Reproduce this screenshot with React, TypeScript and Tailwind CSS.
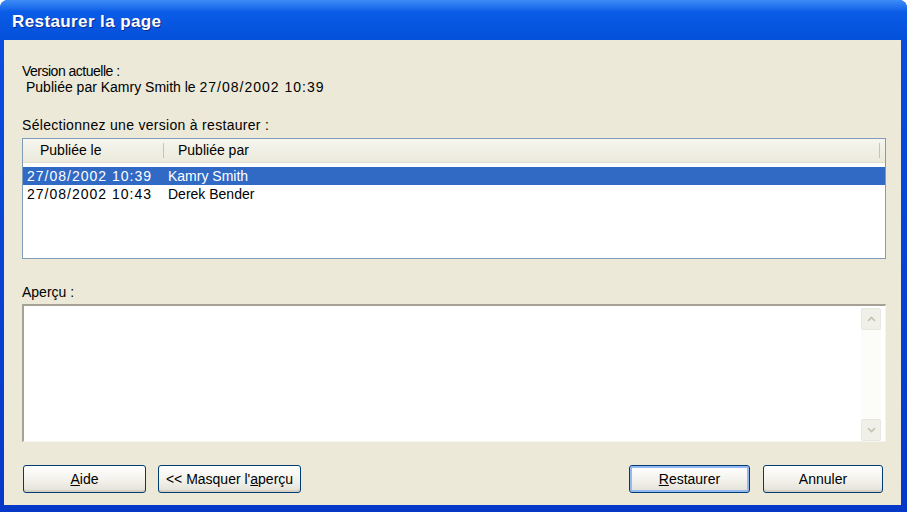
import React from 'react';

const font = { fontFamily: '"Liberation Sans", Arial, sans-serif' };

function XpButton({ children, primary, className }: { children: React.ReactNode; primary?: boolean; className?: string }) {
  return (
    <button
      className={`h-[28px] rounded-[3px] border border-[#003c74] bg-gradient-to-b from-white via-[#f4f3ee] to-[#e3e1d6] text-[14px] leading-none text-black ${
        primary ? 'shadow-[inset_0_0_0_2px_#94b8f2]' : 'shadow-[inset_0_-2px_0_#d6d0c5]'
      } ${className ?? ''}`}
    >
      {children}
    </button>
  );
}

const rows = [
  { date: '27/08/2002 10:39', by: 'Kamry Smith', selected: true },
  { date: '27/08/2002 10:43', by: 'Derek Bender', selected: false },
];

export default function App() {
  return (
    <div className="h-[512px] w-[907px] bg-white" style={font}>
      <div className="flex h-full w-full flex-col overflow-hidden rounded-t-[8px] bg-gradient-to-b from-[#0a4ee0] to-[#0638c8]">
        {/* title bar */}
        <div className="flex h-[40px] shrink-0 items-center bg-gradient-to-b from-[#3d8cf7] via-[#0a5be6] via-30% to-[#0450da] pl-[12px] pt-[3px]">
          <span className="text-[17px] font-bold tracking-[0.4px] text-white [text-shadow:1px_1px_0_#0a2a8a]">
            Restaurer la page
          </span>
        </div>

        {/* body */}
        <div className="mb-[7px] ml-[4px] mr-[6px] flex flex-1 flex-col bg-[#ece9d8] pl-[18px] pr-[15px] text-[14px] text-black">
          <div className="mt-[23px] leading-[16px] tracking-[-0.5px]">Version actuelle :</div>
          <div className="ml-[4px] leading-[16px]">
            Publiée par Kamry Smith le <span className="tracking-[1px]">27/08/2002 10:39</span>
          </div>

          <div className="mt-[22px] leading-[16px] tracking-[0.3px]">Sélectionnez une version à restaurer :</div>
          <div className="mt-[5px] h-[121px] border border-[#7f9db9] bg-white">
            <div className="flex h-[24px] border-b border-[#e2dfd0] bg-gradient-to-b from-[#f6f5ef] to-[#ebeadb]">
              <div className="flex w-[140px] items-center pl-[17px]">Publiée le</div>
              <div className="my-[4px] w-px bg-[#c7c5b2]" />
              <div className="flex flex-1 items-center pl-[14px]">Publiée par</div>
              <div className="my-[4px] mr-[5px] w-px bg-[#c7c5b2]" />
            </div>
            <div className="mt-[4px]">
              {rows.map((r) => (
                <div
                  key={r.date}
                  className={`flex h-[18px] items-center leading-none ${r.selected ? 'bg-[#316ac5] text-white' : ''}`}
                >
                  <span className="w-[145px] pl-[4px] tracking-[1px]">{r.date}</span>
                  <span>{r.by}</span>
                </div>
              ))}
            </div>
          </div>

          <div className="mt-[25px] leading-[16px]">Aperçu :</div>
          <div className="mt-[4px] flex h-[138px] border-l-2 border-t-2 border-b border-r border-l-[#a5a295] border-t-[#a5a295] border-b-[#f5f4ee] border-r-[#f5f4ee] bg-white">
            <div className="flex-1" />
            <div className="mr-[4px] mt-[2px] flex w-[20px] flex-col bg-[#fcfcf8]">
              <div className="flex h-[22px] items-center justify-center rounded-[2px] border border-[#e8e7e0] bg-[#f0efe8]">
                <svg width="9" height="6" viewBox="0 0 9 6">
                  <path d="M1 5 L4.5 1.5 L8 5" fill="none" stroke="#c5c2b2" strokeWidth="1.6" />
                </svg>
              </div>
              <div className="flex-1" />
              <div className="flex h-[22px] items-center justify-center rounded-[2px] border border-[#e8e7e0] bg-[#f0efe8]">
                <svg width="9" height="6" viewBox="0 0 9 6">
                  <path d="M1 1 L4.5 4.5 L8 1" fill="none" stroke="#c5c2b2" strokeWidth="1.6" />
                </svg>
              </div>
            </div>
          </div>

          <div className="mt-[23px] flex items-center">
            <XpButton className="ml-[1px] w-[123px]">
              <span className="underline underline-offset-1">A</span>ide
            </XpButton>
            <XpButton className="ml-[12px] w-[143px]">
              &lt;&lt; Masquer l'<span className="underline underline-offset-1">a</span>perçu
            </XpButton>
            <div className="flex-1" />
            <XpButton primary className="w-[121px]">
              <span className="underline underline-offset-1">R</span>estaurer
            </XpButton>
            <XpButton className="ml-[13px] mr-[3px] w-[120px]">Annuler</XpButton>
          </div>
        </div>
      </div>
    </div>
  );
}
